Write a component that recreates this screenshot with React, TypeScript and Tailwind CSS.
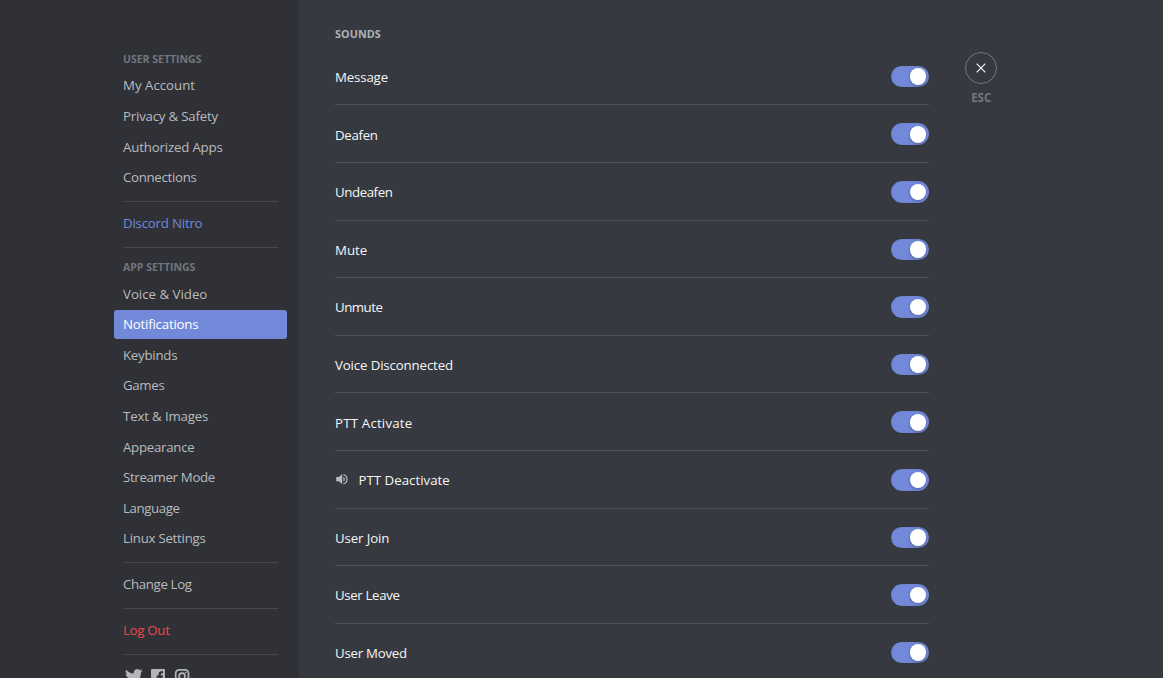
import type { ReactNode } from "react";

function Item({
  children,
  className = "text-[#b9bbbe]",
  tracking = "tracking-normal",
}: {
  children: ReactNode;
  className?: string;
  tracking?: string;
}) {
  return (
    <div className={`mb-[1.8px] flex h-[28.8px] shrink-0 items-center rounded-[3px] px-[9px] pb-[0.3px] text-[13.25px] leading-[18px] whitespace-nowrap ${className} ${tracking}`}>
      <span>{children}</span>
    </div>
  );
}

function Header({ children, className }: { children: ReactNode; className: string }) {
  return (
    <div className={`flex shrink-0 items-center px-[9px] text-[10.5px] leading-[16px] font-bold text-[#72767d] ${className}`}>
      <span>{children}</span>
    </div>
  );
}

function Separator() {
  return <div className="mx-[9px] mt-[7.2px] mb-[7.2px] h-[0.9px] shrink-0 border-t border-[#45474c]" />;
}

function Toggle() {
  return (
    <div className="flex h-[21.6px] w-[37.8px] items-center justify-end rounded-full bg-[#7289da] pr-[2.7px] shadow-[inset_0_0_1px_rgba(32,34,37,0.35)]">
      <div className="size-[16.6px] rounded-full bg-white shadow-[0_1px_3px_rgba(0,0,0,0.3)]" />
    </div>
  );
}

const appItems = [
  { label: "Keybinds", tracking: "tracking-[-0.25px]" },
  { label: "Games", tracking: "tracking-[-0.33px]" },
  { label: "Text & Images", tracking: "tracking-[-0.15px]" },
  { label: "Appearance", tracking: "tracking-[-0.27px]" },
  { label: "Streamer Mode", tracking: "tracking-[-0.33px]" },
  { label: "Language", tracking: "tracking-[-0.4px]" },
  { label: "Linux Settings", tracking: "tracking-[-0.25px]" },
];

const sounds = [
  { label: "Message", tracking: "tracking-[-0.15px]" },
  { label: "Deafen", tracking: "tracking-[-0.3px]" },
  { label: "Undeafen", tracking: "tracking-[-0.42px]" },
  { label: "Mute", tracking: "tracking-normal" },
  { label: "Unmute", tracking: "tracking-[-0.5px]" },
  { label: "Voice Disconnected", tracking: "tracking-[-0.13px]" },
  { label: "PTT Activate", tracking: "tracking-[0.2px]" },
  { label: "PTT Deactivate", tracking: "tracking-[0.03px]", preview: true },
  { label: "User Join", tracking: "tracking-[-0.1px]" },
  { label: "User Leave", tracking: "tracking-[-0.35px]" },
  { label: "User Moved", tracking: "tracking-[-0.25px]" },
];

export default function App() {
  return (
    <div className="flex h-[678px] w-[1163px] overflow-hidden bg-[#36393f] font-['Open_Sans','Noto_Sans',sans-serif]">
      <nav className="flex w-[299px] shrink-0 flex-col overflow-hidden bg-[#2f3136] pt-[46.2px] pr-[12px] pl-[114px]">
        <Header className="h-[24.9px] pt-[0.8px]">USER SETTINGS</Header>
        <Item>My Account</Item>
        <Item tracking="tracking-[-0.2px]">Privacy &amp; Safety</Item>
        <Item tracking="tracking-[-0.17px]">Authorized Apps</Item>
        <Item tracking="tracking-[-0.3px]">Connections</Item>
        <Separator />
        <Item className="text-[#7289da]" tracking="tracking-[-0.2px]">Discord Nitro</Item>
        <Separator />
        <Header className="h-[24.5px]">APP SETTINGS</Header>
        <Item>Voice &amp; Video</Item>
        <Item className="bg-[#7289da] text-white" tracking="tracking-[-0.2px]">Notifications</Item>
        {appItems.map(({ label, tracking }) => (
          <Item key={label} tracking={tracking}>{label}</Item>
        ))}
        <Separator />
        <Item tracking="tracking-[-0.35px]">Change Log</Item>
        <Separator />
        <Item className="text-[#f04747]" tracking="tracking-[-0.3px]">Log Out</Item>
        <Separator />
        <div className="mt-[5.4px] flex shrink-0 gap-[6px] pl-[11px] text-[#b3b5b8]">
          <svg className="size-[18px]" viewBox="0 0 24 24" fill="currentColor">
            <path d="M23.6 4.900a9.600 9.600 0 0 1-2.800.8 4.800 4.800 0 0 0 2.100-2.700 9.700 9.700 0 0 1-3 1.200A4.800 4.800 0 0 0 11.700 8.500 13.700 13.700 0 0 1 1.700 3.500a4.800 4.800 0 0 0 1.500 6.400 4.800 4.800 0 0 1-2.200-.6v.1a4.800 4.800 0 0 0 3.900 4.700 4.800 4.800 0 0 1-2.200.1 4.800 4.800 0 0 0 4.500 3.300A9.700 9.700 0 0 1 0 19.500a13.700 13.700 0 0 0 21.200-12.200 9.700 9.700 0 0 0 2.400-2.400z" />
          </svg>
          <svg className="size-[18px]" viewBox="0 0 24 24" fill="currentColor">
            <path d="M4 2.700h16a1.300 1.300 0 0 1 1.300 1.300v16a1.300 1.300 0 0 1-1.300 1.300h-4.200v-7h2.400l.4-2.900h-2.800V9.600c0-.8.3-1.400 1.500-1.400h1.500V5.600a20 20 0 0 0-2.200-.1c-2.300 0-3.800 1.400-3.800 3.900v2h-2.500v2.900h2.500v7H4A1.300 1.300 0 0 1 2.700 20V4A1.300 1.300 0 0 1 4 2.700z" />
          </svg>
          <svg className="size-[18px]" viewBox="0 0 24 24" fill="none" stroke="currentColor" strokeWidth="2.3">
            <rect x="3.6" y="3.7" width="17" height="17" rx="4.5" />
            <circle cx="12.1" cy="12.2" r="3.9" />
            <circle cx="17" cy="7.3" r="1.1" fill="currentColor" stroke="none" />
          </svg>
        </div>
      </nav>
      <main className="w-[630px] shrink-0 pt-[25px] pl-[36px]">
        <h5 className="flex h-[18px] items-center text-[10.8px] font-bold tracking-[0.08px] text-[#b0b2b5]">SOUNDS</h5>
        <div className="pt-[4.8px]">
          {sounds.map(({ label, tracking, preview }) => (
            <div key={label} className="flex h-[57.6px] items-start justify-between border-b border-[#4f535b] pt-[18.1px]">
              <div className="flex h-[21.6px] items-center pt-[0.8px] text-[13.25px] leading-[18px] text-[#f6f6f7]">
                {preview && (
                  <svg className="mr-[9px] mb-[1.5px] size-[14.4px] text-[#b9bbbe]" viewBox="0 0 24 24" fill="currentColor">
                    <path d="M2 8.5v7h4.500l5.500 5V3.500L6.500 8.500H2zm14.500 3.500A4.500 4.500 0 0 0 14 7.970v8.050A4.470 4.470 0 0 0 16.500 12zM14 3.230v2.060a7 7 0 0 1 0 13.420v2.060A9 9 0 0 0 14 3.230z" />
                  </svg>
                )}
                <span className={tracking}>{label}</span>
              </div>
              <Toggle />
            </div>
          ))}
        </div>
      </main>
      <aside className="flex flex-col items-center pt-[52px] pl-[36px]">
        <button className="flex size-[32.4px] items-center justify-center rounded-full border border-[#72767d] text-[#f6f6f7]">
          <svg className="size-[16px]" viewBox="0 0 16 16" stroke="currentColor" strokeWidth="1.2">
            <path d="M3.7 3.7l8.6 8.6M12.300 3.700l-8.600 8.600" />
          </svg>
        </button>
        <div className="mt-[5px] text-[11.5px] leading-[18px] font-bold text-[#72767d]">ESC</div>
      </aside>
    </div>
  );
}
